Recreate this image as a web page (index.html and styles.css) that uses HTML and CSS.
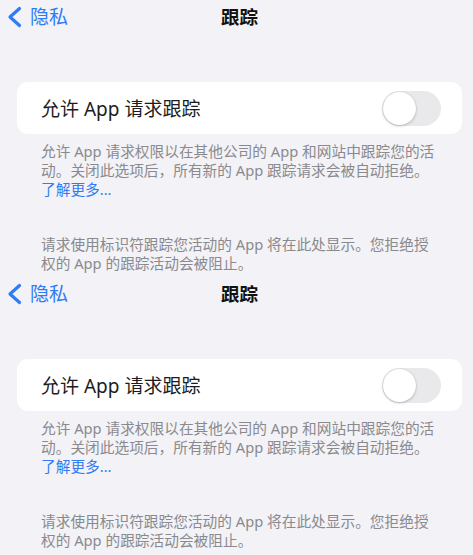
FILE: index.html
```html
<!DOCTYPE html>
<html lang="zh-CN">
<head>
<meta charset="utf-8">
<title>跟踪</title>
<link rel="stylesheet" href="styles.css">
</head>
<body>
<div class="shot">
  <div class="nav">
    <div class="back">
      <svg class="chev" width="15" height="22" viewBox="0 0 15 22"><polyline points="12.5,2.5 3,11 12.5,19.5" fill="none" stroke="#2f7cf6" stroke-width="3.2" stroke-linecap="round" stroke-linejoin="round"/></svg>
      <span class="back-label">隐私</span>
    </div>
    <div class="title">跟踪</div>
  </div>
  <div class="card">
    <span class="label">允许 App 请求跟踪</span>
    <span class="toggle"><span class="knob"></span></span>
  </div>
  <p class="desc">允许 App 请求权限以在其他公司的 App 和网站中跟踪您的活<br>动。关闭此选项后，所有新的 App 跟踪请求会被自动拒绝。<br><span class="link">了解更多...</span></p>
  <p class="desc second">请求使用标识符跟踪您活动的 App 将在此处显示。您拒绝授<br>权的 App 的跟踪活动会被阻止。</p>
</div>
<div class="shot">
  <div class="nav">
    <div class="back">
      <svg class="chev" width="15" height="22" viewBox="0 0 15 22"><polyline points="12.5,2.5 3,11 12.5,19.5" fill="none" stroke="#2f7cf6" stroke-width="3.2" stroke-linecap="round" stroke-linejoin="round"/></svg>
      <span class="back-label">隐私</span>
    </div>
    <div class="title">跟踪</div>
  </div>
  <div class="card">
    <span class="label">允许 App 请求跟踪</span>
    <span class="toggle"><span class="knob"></span></span>
  </div>
  <p class="desc">允许 App 请求权限以在其他公司的 App 和网站中跟踪您的活<br>动。关闭此选项后，所有新的 App 跟踪请求会被自动拒绝。<br><span class="link">了解更多...</span></p>
  <p class="desc second">请求使用标识符跟踪您活动的 App 将在此处显示。您拒绝授<br>权的 App 的跟踪活动会被阻止。</p>
</div>
</body>
</html>
```
FILE: styles.css
```css
html, body {
  margin: 0;
  padding: 0;
  background: #f2f2f7;
}
body {
  font-family: "Noto Sans", "Noto Sans CJK SC", sans-serif;
  width: 473px;
}
.shot {
  height: 277px;
  overflow: hidden;
  position: relative;
  background: #f2f2f7;
}
.shot + .shot {
  height: 278px;
}
.nav {
  height: 34px;
  position: relative;
  display: flex;
  align-items: center;
}
.back {
  display: flex;
  align-items: center;
  padding-left: 7px;
  gap: 8px;
  color: #2f7cf6;
}
.back-label {
  font-size: 19px;
  line-height: 20px;
}
.title {
  position: absolute;
  left: 0;
  right: 0;
  top: 0;
  height: 34px;
  line-height: 34px;
  text-align: center;
  font-size: 18.5px;
  font-weight: 700;
  color: #111;
  padding-left: 6px;
  pointer-events: none;
}
.card {
  margin: 48px 11px 0 17px;
  height: 52px;
  background: #fff;
  border-radius: 11px;
  display: flex;
  align-items: center;
  justify-content: space-between;
  padding: 0 21px 0 24px;
}
.label {
  font-size: 19px;
  color: #1c1c1e;
}
.toggle {
  width: 59px;
  height: 35px;
  border-radius: 18px;
  background: #e9e9eb;
  position: relative;
}
.knob {
  position: absolute;
  left: 1px;
  top: 1px;
  width: 33px;
  height: 33px;
  border-radius: 50%;
  background: #fff;
  box-shadow: 0 1px 3px rgba(0,0,0,0.22), 0 0 0 0.5px rgba(0,0,0,0.06);
}
.desc {
  margin: 8px 0 0 0;
  padding: 0 20px 0 41px;
  font-size: 14.7px;
  line-height: 19px;
  color: #8a8a8e;
  white-space: nowrap;
}
.link {
  color: #2f7cf6;
}
.second {
  margin-top: 36px;
}
```
